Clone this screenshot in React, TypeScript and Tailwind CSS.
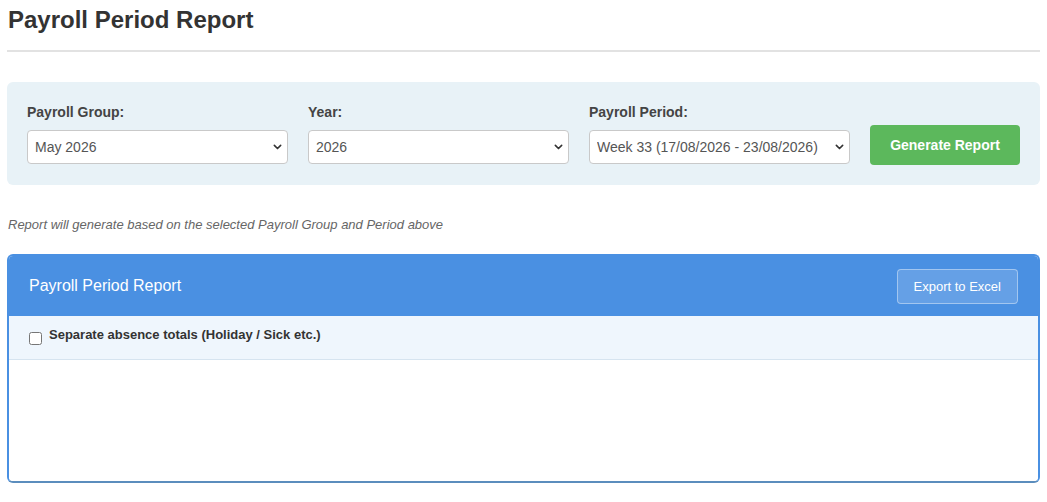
import React from "react";

const font = "font-['Liberation_Sans',Arial,sans-serif]";

const Chevron = () => (
  <svg viewBox="0 0 10 10" className="w-[9px] h-[9px] pointer-events-none absolute right-[6px] top-1/2 -translate-y-1/2 text-[#333]">
    <path d="M1.5 3.2l3.5 3.5 3.5-3.5" fill="none" stroke="currentColor" strokeWidth="1.8" strokeLinecap="round" strokeLinejoin="round" />
  </svg>
);

const SelectBox = ({ label, value }: { label: string; value: string }) => (
  <div className="flex flex-col gap-[10px] flex-1 min-w-0">
    <label className="text-[14px] font-bold text-[#444] leading-[16px]">{label}</label>
    <div className="relative">
      <select
        defaultValue={value}
        className={`${font} appearance-none w-full h-[34px] bg-white border border-[#c9c9c9] rounded-[4px] pl-[7px] pr-6 text-[14px] text-[#555] outline-none`}
      >
        <option>{value}</option>
      </select>
      <Chevron />
    </div>
  </div>
);

export default function App() {
  const [separate, setSeparate] = React.useState(false);
  return (
    <div className={`min-h-screen bg-white px-[7px] pt-[6px] ${font} text-[#333]`}>
      <h1 className="text-[24px] font-bold leading-[28px] pl-[1px] text-[#333]">Payroll Period Report</h1>
      <div className="mt-[16px] h-[2px] bg-[#e2e2e2]" />

      {/* filters */}
      <div className="mt-[30px] bg-[#e8f2f7] rounded-[6px] px-[20px] pt-[22px] pb-[21px] flex items-end gap-[20px]">
        <SelectBox label="Payroll Group:" value="May 2026" />
        <SelectBox label="Year:" value="2026" />
        <SelectBox label="Payroll Period:" value="Week 33 (17/08/2026 - 23/08/2026)" />
        <button className={`${font} w-[150px] h-[40px] mb-[-1px] shrink-0 bg-[#5cb85c] rounded-[4px] text-white text-[14px] font-bold`}>
          Generate Report
        </button>
      </div>

      <p className="mt-[32px] text-[13px] italic text-[#666] pl-[1px] leading-[16px]">
        Report will generate based on the selected Payroll Group and Period above
      </p>

      {/* report card */}
      <div className="mt-[21px] border-2 border-[#4a90e2] border-b-[#5b8dbd] rounded-[6px] overflow-hidden h-[229px] flex flex-col">
        <div className="bg-[#4a90e2] h-[60px] shrink-0 flex items-center justify-between pl-[20px] pr-[20px]">
          <span className="text-white text-[16px]">Payroll Period Report</span>
          <button className={`${font} h-[35px] px-[16px] mt-[1px] rounded-[4px] border border-white/40 bg-white/15 text-white text-[13px]`}>
            Export to Excel
          </button>
        </div>
        <div className="bg-[#eff6fd] border-b border-[#d6e4f0] h-[44px] shrink-0 flex items-center pl-[20px] pb-[5px]">
          <label className="flex items-center gap-[7px] cursor-pointer">
            <input
              type="checkbox"
              checked={separate}
              onChange={(e) => setSeparate(e.target.checked)}
              className="w-[13px] h-[13px] mt-[7px]"
            />
            <span className="text-[13px] font-bold text-[#333]">Separate absence totals (Holiday / Sick etc.)</span>
          </label>
        </div>
        <div className="flex-1 bg-white" />
      </div>
    </div>
  );
}
